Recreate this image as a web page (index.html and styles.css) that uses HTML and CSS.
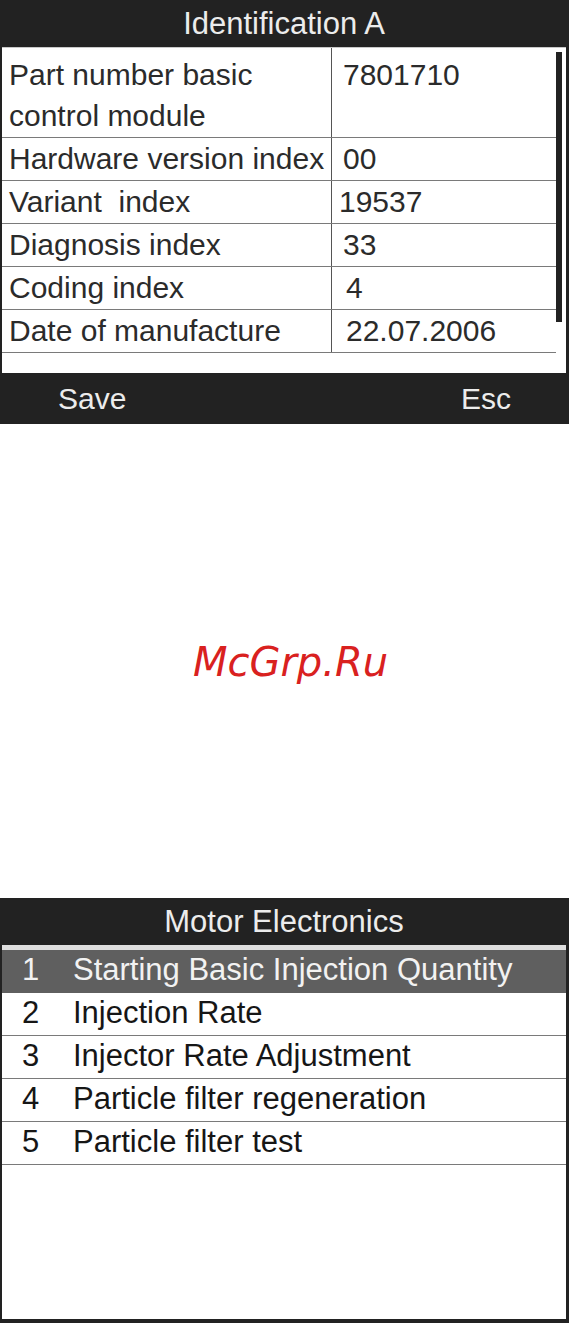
FILE: index.html
```html
<!DOCTYPE html>
<html lang="en">
<head>
    <meta charset="UTF-8">
    <meta name="viewport" content="width=device-width, initial-scale=1.0">
    <title>Identification A | Motor Electronics</title>
    <link rel="stylesheet" href="styles.css">
</head>
<body>
    <div class="screen ident">
        <div class="title">Identification A</div>
        <div class="content">
            <div class="table">
                <div class="row tall">
                    <div class="label">Part number basic control module</div>
                    <div class="value">7801710</div>
                </div>
                <div class="row">
                    <div class="label">Hardware version index</div>
                    <div class="value">00</div>
                </div>
                <div class="row">
                    <div class="label">Variant&nbsp; index</div>
                    <div class="value shift-left">19537</div>
                </div>
                <div class="row">
                    <div class="label">Diagnosis index</div>
                    <div class="value">33</div>
                </div>
                <div class="row">
                    <div class="label">Coding index</div>
                    <div class="value shift-right">4</div>
                </div>
                <div class="row">
                    <div class="label">Date of manufacture</div>
                    <div class="value shift-right">22.07.2006</div>
                </div>
            </div>
            <div class="gutter">
                <div class="scrollbar"></div>
            </div>
        </div>
        <div class="footer">
            <span>Save</span>
            <span>Esc</span>
        </div>
    </div>

    <div class="gap">
        <div class="watermark">McGrp.Ru</div>
    </div>

    <div class="screen menu">
        <div class="title">Motor Electronics</div>
        <ul class="items">
            <li class="selected"><span class="num">1</span>Starting Basic Injection Quantity</li>
            <li><span class="num">2</span>Injection Rate</li>
            <li><span class="num">3</span>Injector Rate Adjustment</li>
            <li><span class="num">4</span>Particle filter regeneration</li>
            <li><span class="num">5</span>Particle filter test</li>
        </ul>
    </div>
</body>
</html>
```

FILE: styles.css
```css
body {
    font-family: "Liberation Sans", Arial, sans-serif;
    margin: 0;
    padding: 0;
    background-color: #fff;
    width: 569px;
}
.screen {
    box-sizing: border-box;
    width: 569px;
    border-left: 2px solid #222;
    border-right: 3px solid #222;
    background-color: #fff;
}
.title {
    height: 47px;
    line-height: 47px;
    background-color: #222;
    color: #ececec;
    font-size: 31px;
    text-align: center;
}

/* identification screen */
.ident {
    height: 424px;
    display: flex;
    flex-direction: column;
}
.content {
    flex: 1;
    display: flex;
    border-top: 1px solid #c8c8c8;
}
.table {
    width: 554px;
}
.row {
    display: flex;
    height: 42px;
    border-bottom: 1px solid #7a7a7a;
    font-size: 30px;
    line-height: 42px;
    color: #2b2b2b;
}
.row.tall {
    height: 89px;
}
.row.tall .label {
    padding-top: 6px;
    line-height: 41px;
}
.label {
    box-sizing: border-box;
    width: 330px;
    padding-left: 7px;
    border-right: 1px solid #555;
    white-space: normal;
}
.row:not(.tall) .label {
    white-space: nowrap;
}
.value {
    flex: 1;
    padding-left: 11px;
}
.row.tall .value {
    padding-top: 6px;
    line-height: 41px;
}
.value.shift-left {
    padding-left: 7px;
}
.value.shift-right {
    padding-left: 14px;
}
.gutter {
    flex: 1;
}
.scrollbar {
    width: 6px;
    height: 270px;
    margin-top: 4px;
    background-color: #222;
}
.footer {
    height: 51px;
    line-height: 51px;
    background-color: #222;
    color: #ececec;
    font-size: 30px;
    display: flex;
    justify-content: space-between;
    padding: 0 55px 0 56px;
}

/* space between screens */
.gap {
    height: 474px;
    display: flex;
    align-items: center;
    justify-content: center;
}
.watermark {
    font-family: "DejaVu Sans", sans-serif;
    font-style: italic;
    font-size: 40px;
    color: #d9211f;
    margin-left: 12px;
    margin-top: 2px;
}

/* motor electronics menu */
.menu {
    height: 425px;
    border-bottom: 4px solid #222;
}
.items {
    list-style: none;
    margin: 0;
    padding: 0;
    border-top: 5px solid #dedede;
}
.items li {
    height: 42px;
    line-height: 40px;
    font-size: 31px;
    color: #161616;
    border-bottom: 1px solid #7a7a7a;
    display: flex;
}
.items li.selected {
    background-color: #5f5f5f;
    color: #f2f2f2;
    border-bottom-color: #5f5f5f;
}
.num {
    width: 71px;
    padding-left: 20px;
    box-sizing: border-box;
    flex-shrink: 0;
}
```
